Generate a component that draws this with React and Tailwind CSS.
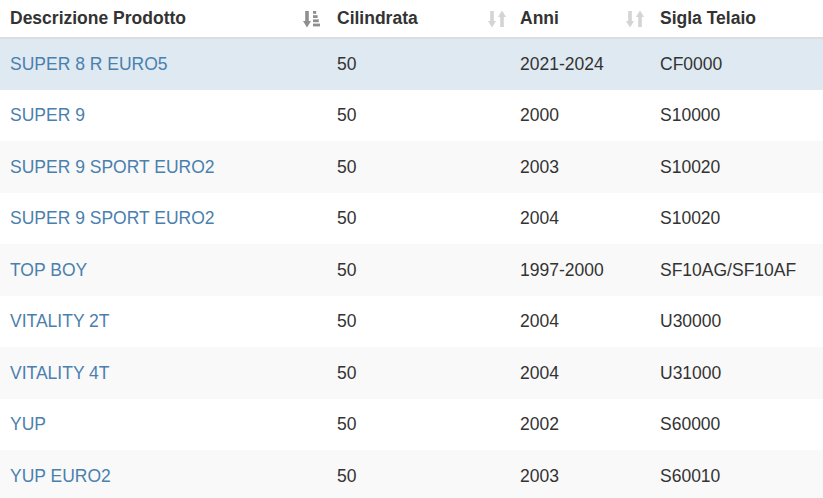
const rows = [
  ["SUPER 8 R EURO5", "50", "2021-2024", "CF0000"],
  ["SUPER 9", "50", "2000", "S10000"],
  ["SUPER 9 SPORT EURO2", "50", "2003", "S10020"],
  ["SUPER 9 SPORT EURO2", "50", "2004", "S10020"],
  ["TOP BOY", "50", "1997-2000", "SF10AG/SF10AF"],
  ["VITALITY 2T", "50", "2004", "U30000"],
  ["VITALITY 4T", "50", "2004", "U31000"],
  ["YUP", "50", "2002", "S60000"],
  ["YUP EURO2", "50", "2003", "S60010"],
];

// sorted column icon (arrow down + stacked bars)
function SortDesc() {
  return (
    <svg width="17" height="18" viewBox="0 0 17 18" className="shrink-0 text-[#8f8f8f]">
      <rect x="2.2" y="1" width="3.6" height="11" fill="currentColor" />
      <path d="M0 11 L8 11 L4 17.5 Z" fill="currentColor" />
      <rect x="10" y="1" width="3.2" height="2.8" fill="currentColor" />
      <rect x="10" y="5.2" width="4.6" height="2.8" fill="currentColor" />
      <rect x="10" y="9.4" width="5.8" height="2.8" fill="currentColor" />
      <rect x="10" y="13.6" width="7" height="2.8" fill="currentColor" />
    </svg>
  );
}

// unsorted column icon (down + up arrows)
function SortBoth() {
  return (
    <svg width="18" height="18" viewBox="0 0 18 18" className="shrink-0 text-[#d4d4d4]">
      <rect x="2.2" y="1" width="3.6" height="11" fill="currentColor" />
      <path d="M0 11 L8 11 L4 17.5 Z" fill="currentColor" />
      <rect x="12.2" y="6" width="3.6" height="11" fill="currentColor" />
      <path d="M10 7 L18 7 L14 0.5 Z" fill="currentColor" />
    </svg>
  );
}

export default function App() {
  return (
    <div className="w-[823px] h-[498px] overflow-hidden bg-white font-['Liberation_Sans',Arial,sans-serif] text-[17.5px] text-[#333]">
      <table className="w-full border-collapse table-fixed">
        <colgroup>
          <col className="w-[327px]" />
          <col className="w-[183px]" />
          <col className="w-[140px]" />
          <col />
        </colgroup>
        <thead>
          <tr className="h-[38px] border-b-2 border-[#ddd]">
            <th className="pl-[10px] pr-[7px] text-left font-bold">
              <div className="flex items-center justify-between">
                <span>Descrizione Prodotto</span>
                <SortDesc />
              </div>
            </th>
            <th className="pl-[10px] pr-[4px] text-left font-bold">
              <div className="flex items-center justify-between">
                <span>Cilindrata</span>
                <SortBoth />
              </div>
            </th>
            <th className="pl-[10px] pr-[6px] text-left font-bold">
              <div className="flex items-center justify-between">
                <span>Anni</span>
                <SortBoth />
              </div>
            </th>
            <th className="pl-[10px] text-left font-bold">Sigla Telaio</th>
          </tr>
        </thead>
        <tbody>
          {rows.map((r, i) => (
            <tr
              key={i}
              className={
                "h-[51.5px] " +
                (i === 0 ? "bg-[#dfe9f2]" : i % 2 === 0 ? "bg-[#f9f9f9]" : "bg-white")
              }
            >
              <td className="pl-[10px] text-[#4a80ae]">{r[0]}</td>
              <td className="pl-[10px]">{r[1]}</td>
              <td className="pl-[10px]">{r[2]}</td>
              <td className="pl-[10px]">{r[3]}</td>
            </tr>
          ))}
        </tbody>
      </table>
    </div>
  );
}
